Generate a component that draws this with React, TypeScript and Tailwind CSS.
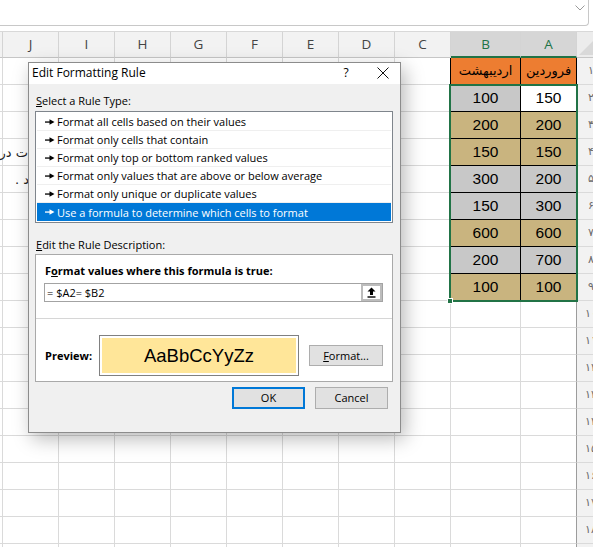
import React from "react";

const COLS: { l: string; w: number }[] = [
  { l: "", w: 3 },
  { l: "J", w: 56 },
  { l: "I", w: 56 },
  { l: "H", w: 56 },
  { l: "G", w: 56 },
  { l: "F", w: 56 },
  { l: "E", w: 56 },
  { l: "D", w: 56 },
  { l: "C", w: 56 },
  { l: "B", w: 70 },
  { l: "A", w: 56 },
];

const FA = ["۱", "۲", "۳", "۴", "۵", "۶", "۷", "۸", "۹", "۱۰", "۱۱", "۱۲", "۱۳", "۱۴", "۱۵", "۱۶", "۱۷", "۱۸", "۱۹"];

type Cell = { v: string; bg: string };
const TAN = "bg-[#c9b47f]";
const GRAY = "bg-[#c8c8c8]";
const DATA: [Cell, Cell][] = [
  [{ v: "اردیبهشت", bg: "bg-[#ed7d31]" }, { v: "فروردین", bg: "bg-[#ed7d31]" }],
  [{ v: "100", bg: GRAY }, { v: "150", bg: "bg-white" }],
  [{ v: "200", bg: TAN }, { v: "200", bg: TAN }],
  [{ v: "150", bg: TAN }, { v: "150", bg: TAN }],
  [{ v: "300", bg: GRAY }, { v: "200", bg: GRAY }],
  [{ v: "150", bg: GRAY }, { v: "300", bg: GRAY }],
  [{ v: "600", bg: TAN }, { v: "600", bg: TAN }],
  [{ v: "200", bg: GRAY }, { v: "700", bg: GRAY }],
  [{ v: "100", bg: TAN }, { v: "100", bg: TAN }],
];

function Arrow({ color }: { color: string }) {
  return (
    <svg width="10" height="8" viewBox="0 0 10 8" className="shrink-0">
      <rect x="0" y="3.4" width="5" height="1.3" fill={color} />
      <path d="M4.5 1.2 L9.5 4 L4.5 6.8 Z" fill={color} />
    </svg>
  );
}

const RULES = [
  "Format all cells based on their values",
  "Format only cells that contain",
  "Format only top or bottom ranked values",
  "Format only values that are above or below average",
  "Format only unique or duplicate values",
  "Use a formula to determine which cells to format",
];

function Dialog() {
  return (
    <div className="absolute left-[28px] top-[62px] w-[373px] h-[371px] border border-[#8c8c8c] bg-[#f0f0f0] shadow-[4px_6px_18px_rgba(0,0,0,0.28)] font-['Open_Sans',sans-serif] text-[11px] text-black flex flex-col">
      {/* title bar */}
      <div className="h-[21px] bg-white flex items-start shrink-0">
        <div className="pl-[3px] pt-[1px] leading-[18px] text-[12px] flex-1">Edit Formatting Rule</div>
        <div className="w-[20px] text-center pt-[1px] leading-[18px] text-[12px] mr-[17px]">?</div>
        <div className="w-[20px] h-[20px] flex items-center justify-center mr-[7px]">
          <svg width="12" height="12" viewBox="0 0 12 12">
            <path d="M0.5 0.5 L11.5 11.5 M11.5 0.5 L0.5 11.5" stroke="#111" strokeWidth="1" />
          </svg>
        </div>
      </div>
      {/* body */}
      <div className="px-[6px] flex flex-col">
        <div className="mt-[9px] pl-[1px] leading-[16px]">
          <span className="underline">S</span>elect a Rule Type:
        </div>
        <div className="mt-[2px] w-[358px] h-[112px] border border-[#7f858c] bg-white px-[1px] pt-[1px]">
          {RULES.map((r, i) => {
            const sel = i === RULES.length - 1;
            return (
              <div
                key={r}
                className={
                  "h-[18px] flex items-center gap-[2px] pl-[8px] " +
                  (sel ? "bg-[#0078d7] text-white" : "border-b border-[#efefef] text-black")
                }
              >
                <Arrow color={sel ? "#ffffff" : "#000000"} />
                <span className="leading-[17px] whitespace-nowrap">{r}</span>
              </div>
            );
          })}
        </div>
        <div className="mt-[14px] pl-[1px] leading-[16px]">
          <span className="underline">E</span>dit the Rule Description:
        </div>
        <div className="mt-[1px] w-[358px] h-[128px] border border-[#a9a9a9] bg-white flex flex-col">
          <div className="mt-[8px] pl-[9px] font-bold leading-[16px] whitespace-nowrap">
            F<span className="underline">o</span>rmat values where this formula is true:
          </div>
          <div className="mt-[4px] ml-[8px] w-[339px] h-[19px] border border-[#a3a3a3] bg-white flex items-center">
            <div className="flex-1 pl-[2px] leading-[16px] whitespace-nowrap">= $A2= $B2</div>
            <div className="w-[21px] h-[17px] border-2 border-[#bcbcbc] bg-white flex items-center justify-center">
              <svg width="9" height="11" viewBox="0 0 9 11">
                <path d="M4.5 0.5 L8.5 4.5 L6 4.5 L6 8 L3 8 L3 4.5 L0.5 4.5 Z" fill="#000" />
                <rect x="0.5" y="9.3" width="8" height="1.4" fill="#000" />
              </svg>
            </div>
          </div>
          <div className="mt-[16px] h-px bg-[#d6d6d6]" />
          <div className="mt-[16px] flex items-center">
            <div className="pl-[9px] w-[63px] font-bold leading-[16px]">Preview:</div>
            <div className="w-[200px] h-[41px] border border-[#808080] bg-white p-[2px]">
              <div className="w-full h-full bg-[#ffe699] flex items-center justify-center font-['Liberation_Sans',sans-serif] text-[18.5px] text-black">
                AaBbCcYyZz
              </div>
            </div>
            <div className="ml-[10px] w-[74px] h-[21px] border border-[#adadad] bg-[#e1e1e1] flex items-center justify-center leading-[16px]">
              <span className="underline">F</span>ormat...
            </div>
          </div>
        </div>
        <div className="mt-[5px] flex justify-end pr-[6px] gap-[10px]">
          <div className="w-[73px] h-[22px] border-2 border-[#0078d7] bg-[#e1e1e1] flex items-center justify-center leading-[16px]">
            OK
          </div>
          <div className="w-[73px] h-[22px] border border-[#adadad] bg-[#e1e1e1] flex items-center justify-center leading-[16px]">
            Cancel
          </div>
        </div>
      </div>
    </div>
  );
}

export default function App() {
  const rows = Array.from({ length: 19 }, (_, i) => i);
  return (
    <div className="relative w-[593px] h-[547px] overflow-hidden bg-white font-['Liberation_Sans',sans-serif]">
      {/* formula bar */}
      <div className="h-[26px] w-[589px] border-b border-r border-[#c8c8c8] rounded-br-[4px] bg-white flex justify-end items-start">
        <svg width="10" height="6" viewBox="0 0 10 6" className="mt-[5px] mr-[3px]">
          <path d="M0.5 0.5 L5 5 L9.5 0.5" stroke="#9a9a9a" fill="none" strokeWidth="1" />
        </svg>
      </div>
      <div className="h-[5px]" />
      {/* column headers */}
      <div className="flex h-[27px] w-[620px] border-t border-[#d8d8d8] bg-[#f2f2f2]">
        {COLS.map((c) => {
          const sel = c.l === "A" || c.l === "B";
          return (
            <div
              key={c.l || "x"}
              style={{ width: c.w }}
              className={
                "shrink-0 h-full flex items-center justify-center font-['Open_Sans',sans-serif] text-[13.5px] border-r border-[#d4d4d4] " +
                (sel
                  ? "bg-[#d6d6d6] text-[#217346] border-b-2 border-b-[#217346]"
                  : "text-[#444] border-b border-b-[#c6c6c6]")
              }
            >
              {c.l}
            </div>
          );
        })}
        <div className="w-[28px] shrink-0 h-full bg-[#ececec] border-b border-[#c6c6c6] flex items-end justify-start">
          <svg width="16" height="18" viewBox="0 0 16 18">
            <path d="M16 2 L16 16 L2 16 Z" fill="#d9d9d9" />
          </svg>
        </div>
      </div>
      {/* grid rows */}
      <div className="relative">
        {rows.map((r) => {
          const data = r < 9 ? DATA[r] : null;
          return (
            <div key={r} className="relative flex h-[27px] w-[620px]">
              {COLS.map((c, ci) => {
                const isB = c.l === "B";
                const isA = c.l === "A";
                const isC = c.l === "C";
                if (data && (isA || isB)) {
                  const cell = isB ? data[0] : data[1];
                  const persian = r === 0;
                  return (
                    <div
                      key={ci}
                      style={{ width: c.w }}
                      className={
                        "shrink-0 h-full border-r border-b border-black flex items-center justify-center text-black " +
                        cell.bg +
                        (persian ? " font-['DejaVu_Sans',sans-serif] text-[13px]" : " text-[15.5px]")
                      }
                      dir={persian ? "rtl" : undefined}
                    >
                      {cell.v}
                    </div>
                  );
                }
                return (
                  <div
                    key={ci}
                    style={{ width: c.w }}
                    className={
                      "shrink-0 h-full border-b border-[#dadada] border-r " +
                      (isC && data ? "border-r-black" : isA ? "border-r-[#9c9c9c]" : "border-r-[#dadada]")
                    }
                  />
                );
              })}
              <div className="w-[28px] shrink-0 h-full bg-[#f2f2f2] border-b border-[#dadada] flex items-center justify-center font-['DejaVu_Sans',sans-serif] text-[11px] text-[#6a6a6a]">
                {FA[r]}
              </div>
              {r === 3 && (
                <div
                  dir="rtl"
                  className="absolute left-0 top-0 w-[28px] h-full flex items-center justify-start whitespace-nowrap font-['DejaVu_Sans',sans-serif] text-[13px] text-[#222]"
                >
                  <span>ت در یک سطر نوشته شود</span>
                </div>
              )}
              {r === 4 && (
                <div
                  dir="rtl"
                  className="absolute left-0 top-0 w-[29px] h-full flex items-center justify-start whitespace-nowrap font-['DejaVu_Sans',sans-serif] text-[13px] text-[#222]"
                >
                  <span>د .</span>
                </div>
              )}
            </div>
          );
        })}
        {/* selection outline */}
        <div className="absolute left-[449px] top-[26px] w-[129px] h-[218px] border-2 border-[#217346] pointer-events-none" />
        <div className="absolute left-[447px] top-[240px] w-[6px] h-[6px] bg-[#217346] border border-white" />
      </div>
      <Dialog />
    </div>
  );
}
